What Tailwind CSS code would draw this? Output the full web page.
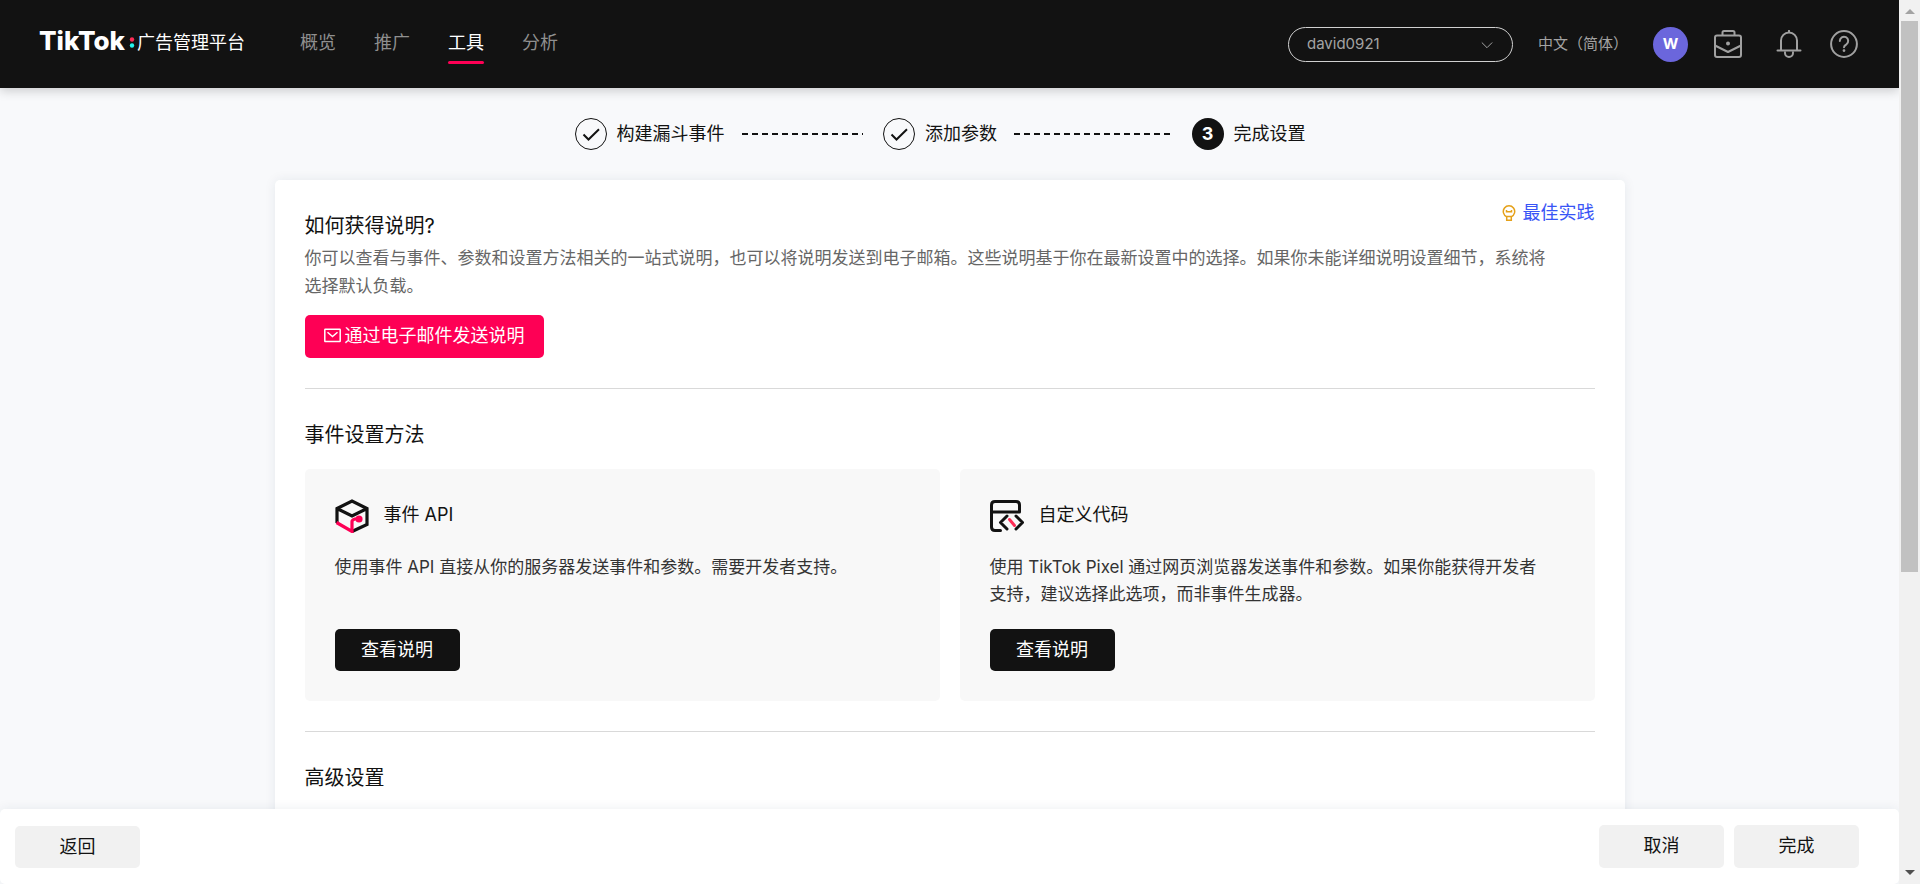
<!DOCTYPE html>
<html lang="zh-CN">
<head>
<meta charset="utf-8">
<title>TikTok 广告管理平台</title>
<script src="https://cdn.jsdelivr.net/npm/@tailwindcss/browser@4"></script>
</head>
<body class="flex h-screen overflow-hidden bg-[#f8f9fb] font-['Inter','Noto_Sans_CJK_SC',sans-serif] text-[18px] text-[#121212]">
<div class="flex min-w-0 flex-1 flex-col">

  <header class="relative z-20 flex h-[88px] shrink-0 items-center bg-[#121212] pr-[41px] pb-[2px] pl-[39px] shadow-[0_3px_10px_rgba(0,0,0,0.18)]">
    <a href="#" class="flex items-center text-white">
      <span class="pb-1 font-['Inter'] text-[26px] leading-8 font-extrabold">TikTok</span>
      <svg class="ml-1 h-5 w-1.5" viewBox="0 0 6 20" aria-hidden="true"><circle cx="3" cy="6.500" r="2.200" fill="#fe2c55"/><circle cx="3" cy="12.500" r="2.200" fill="#25f4ee"/></svg>
      <span class="ml-[2px] leading-7">广告管理平台</span>
    </a>
    <nav class="ml-[55px] flex gap-[38px] leading-7 text-[#8f8f8f]">
      <a href="#">概览</a>
      <a href="#">推广</a>
      <a href="#" class="relative text-white">工具<span class="absolute inset-x-0 -bottom-[7px] h-[3px] rounded-sm bg-[#fe0055]"></span></a>
      <a href="#">分析</a>
    </nav>
    <div class="ml-auto flex items-center pt-[2px]">
      <div class="relative">
        <select aria-label="账户" class="block h-[35px] w-[225px] appearance-none rounded-full border border-[#d0d0d0] bg-transparent pl-[18px] text-[15px] text-[#a3a3a3]"><option>david0921</option></select>
        <svg class="pointer-events-none absolute top-3 right-5 h-3 w-3" viewBox="0 0 12 12" fill="none" stroke="#a3a3a3" stroke-width="1"><path d="M.8 3.500 6 8.700l5.200-5.200"/></svg>
      </div>
      <button type="button" class="ml-[25px] text-[15px] text-[#a3a3a3]">中文（简体）</button>
      <button type="button" class="ml-[25px] h-[35px] w-[35px] rounded-full bg-[#6b66dc] text-[15px] font-bold text-white">W</button>
      <button type="button" class="ml-[26px]" aria-label="商务中心"><svg class="h-7 w-7" viewBox="0 0 28 28" fill="none" stroke="#a0a0a0" stroke-width="2" stroke-linejoin="round"><rect x="1" y="5.500" width="26" height="21.500" rx="2"/><path d="M8.500 5V2.500Q8.500 1 10 1h9q1.500 0 1.500 1.500V5M1 15.500 14 22l13-6.500"/><circle cx="14" cy="13.500" r="1" fill="#a0a0a0"/></svg></button>
      <button type="button" class="ml-[33px]" aria-label="通知"><svg class="h-7 w-7" viewBox="0 0 28 28" fill="none" stroke="#a0a0a0" stroke-width="2" stroke-linecap="round"><path d="M2.500 20.500h23M6 20V10.500a8 8 0 0 1 16 0V20M14 2V.8M10 22.500v.5a4 4 0 0 0 8 0v-.5"/></svg></button>
      <button type="button" class="ml-[27px]" aria-label="帮助"><svg class="h-7 w-7" viewBox="0 0 28 28" fill="none" stroke="#a0a0a0" stroke-width="2" stroke-linecap="round"><circle cx="14" cy="14" r="12.900"/><path d="M9.800 11a4.200 4.200 0 1 1 6.600 3.400C15 15.300 14 16 14 17.300"/><circle cx="14" cy="20.600" r=".8" fill="#a0a0a0" stroke-width="1.200"/></svg></button>
    </div>
  </header>

  <main class="min-h-0 flex-1 overflow-hidden pt-[30px]">
    <ol class="mx-auto flex w-[750px] max-w-full items-center leading-8">
      <li class="flex flex-1 items-center">
        <svg class="h-8 w-8 shrink-0" viewBox="0 0 32 32" fill="none" stroke="#121212"><circle cx="16" cy="16" r="15.500"/><path d="m8.500 16.500 5 5L24 11.200" stroke-width="2"/></svg>
        <span class="ml-[10px] shrink-0">构建漏斗事件</span>
        <span class="mr-5 ml-[17px] h-[2px] flex-1 bg-[repeating-linear-gradient(90deg,#121212_0_6px,transparent_6px_10px)]"></span>
      </li>
      <li class="flex flex-1 items-center">
        <svg class="h-8 w-8 shrink-0" viewBox="0 0 32 32" fill="none" stroke="#121212"><circle cx="16" cy="16" r="15.500"/><path d="m8.500 16.500 5 5L24 11.200" stroke-width="2"/></svg>
        <span class="ml-[10px] shrink-0">添加参数</span>
        <span class="mr-5 ml-[17px] h-[2px] flex-1 bg-[repeating-linear-gradient(90deg,#121212_0_6px,transparent_6px_10px)]"></span>
      </li>
      <li class="flex items-center pr-[19px]">
        <span class="h-8 w-8 rounded-full bg-[#121212] text-center font-bold text-white">3</span>
        <span class="ml-[10px]">完成设置</span>
      </li>
    </ol>

    <section class="mx-auto mt-[30px] min-h-full w-full max-w-[1350px] rounded-[5px] bg-white px-[30px] pt-5 shadow-[0_0_12px_rgba(30,50,80,0.08)]">
      <div class="flex h-[41px] items-end justify-between">
        <h1 class="text-[20px] leading-[30px]">如何获得说明?</h1>
        <a href="#" class="flex items-center gap-[7px] self-start leading-[26px] text-[#3955f6]">
          <svg class="h-4 w-[14px]" viewBox="0 0 14 16" fill="none" stroke="#e5a11a" stroke-width="1.500"><path d="M4.700 11.700A5.700 5.700 0 1 1 9.300 11.700M4.700 11.500v3.700h4.600v-3.700zM4.500 5v2.500M9.500 5v2.500M4.500 6.700h5"/></svg>最佳实践</a>
      </div>
      <p class="mt-[3px] text-[17px] leading-7 text-[#666]">你可以查看与事件、参数和设置方法相关的一站式说明，也可以将说明发送到电子邮箱。这些说明基于你在最新设置中的选择。如果你未能详细说明设置细节，系统将<br>选择默认负载。</p>
      <button type="button" class="mt-[15px] flex h-[43px] items-center gap-1 rounded-[5px] bg-[#fe0055] px-[19px] pb-[2px] text-white">
        <svg class="h-[15px] w-[17px]" viewBox="0 0 17 15" fill="none" stroke="#fff" stroke-width="1.500"><rect x=".8" y="1.300" width="15.400" height="12.200" rx=".5"/><path d="m3.500 4.200 5 4.300 5-4.300"/></svg>通过电子邮件发送说明</button>
      <hr class="mt-[30px] border-[#d9d9d9]">

      <h2 class="mt-[31px] text-[20px] leading-[30px]">事件设置方法</h2>
      <div class="mt-[19px] grid grid-cols-2 gap-5">
        <article class="flex flex-col items-start rounded-[5px] bg-[#f8f8f8] p-[30px]">
          <div class="flex h-[34px] items-center gap-[15px]">
            <svg class="h-[34px] w-[34px]" viewBox="0 0 34 34" fill="none" stroke-width="3.200"><path d="M2 24V9.500L17 2l15 7.500v16L17 32.500M2 9.500 17 17l15-7.500" stroke="#121212"/><path d="m1.500 23.500 15.500 9V22.500q0-1.500 3-2.500h2" stroke="#fe0055"/><circle cx="24" cy="20" r="3.600" fill="#fe0055"/></svg>
            <h3 class="pb-[3px]">事件 API</h3>
          </div>
          <p class="mt-[21px] min-h-[54px] text-[17px] leading-[27px] text-[#333]">使用事件 API 直接从你的服务器发送事件和参数。需要开发者支持。</p>
          <button type="button" class="mt-[21px] h-[42px] w-[125px] rounded-[5px] bg-[#121212] pb-[2px] text-white">查看说明</button>
        </article>
        <article class="flex flex-col items-start rounded-[5px] bg-[#f8f8f8] p-[30px]">
          <div class="flex h-[34px] items-center gap-[15px]">
            <svg class="h-[34px] w-[34px]" viewBox="0 0 34 34" fill="none" stroke="#121212" stroke-width="3" stroke-linecap="round" stroke-linejoin="round"><path d="M10.500 31.500H5q-3.500 0-3.500-3.500V6Q1.500 2.500 5 2.500h21q3.500 0 3.500 3.500v7h-28M17 17l-6.500 6.500L17 30M26 17l6.500 6.500L26 30"/><path d="m19.500 20.500 5 6" stroke="#fe2c55"/></svg>
            <h3 class="pb-[3px]">自定义代码</h3>
          </div>
          <p class="mt-[21px] min-h-[54px] text-[17px] leading-[27px] text-[#333]">使用 TikTok Pixel 通过网页浏览器发送事件和参数。如果你能获得开发者<br>支持，建议选择此选项，而非事件生成器。</p>
          <button type="button" class="mt-[21px] h-[42px] w-[125px] rounded-[5px] bg-[#121212] pb-[2px] text-white">查看说明</button>
        </article>
      </div>
      <hr class="mt-[30px] border-[#d9d9d9]">
      <h2 class="mt-[31px] text-[20px] leading-[30px]">高级设置</h2>
    </section>
  </main>

  <footer class="relative z-10 flex h-[75px] shrink-0 items-center gap-[10px] rounded-[5px] bg-white pr-10 pl-[15px] shadow-[0_0_12px_rgba(30,50,80,0.08)]">
    <button type="button" class="mr-auto h-[42px] w-[125px] rounded-[5px] bg-[#f1f1f1]">返回</button>
    <button type="button" class="h-[43px] w-[125px] rounded-[5px] bg-[#f1f1f1] pb-[2px]">取消</button>
    <button type="button" class="h-[43px] w-[125px] rounded-[5px] bg-[#f1f1f1] pb-[2px]">完成</button>
  </footer>
</div>

<div class="relative z-30 flex w-[21px] shrink-0 flex-col items-center bg-[#f1f1f1]" aria-hidden="true">
  <svg class="h-[21px] w-[21px] shrink-0" viewBox="0 0 21 21"><path d="M6 14h10l-5-5z" fill="#a3a3a3"/></svg>
  <div class="w-[17px] basis-[551px] bg-[#c1c1c1]"></div>
  <svg class="mt-auto h-[21px] w-[21px] shrink-0" viewBox="0 0 21 21"><path d="M6 7h10l-5 5z" fill="#505050"/></svg>
</div>
</body>
</html>
